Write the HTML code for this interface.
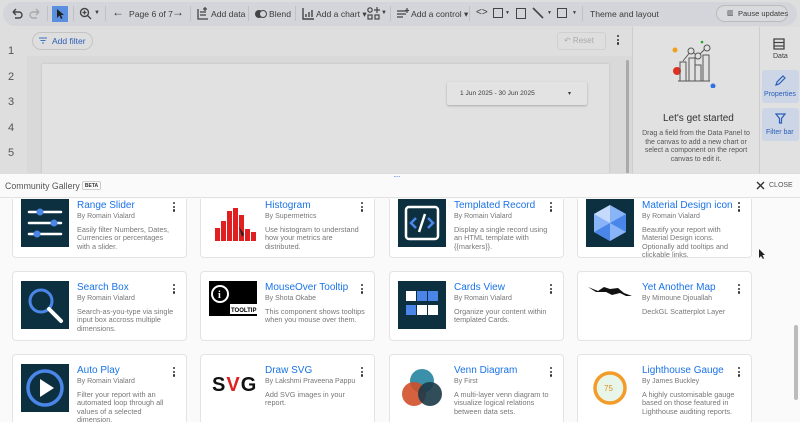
<!DOCTYPE html>
<html><head><meta charset="utf-8"><style>
*{box-sizing:border-box;margin:0;padding:0}
body{width:800px;height:422px;overflow:hidden;background:#dedede;font-family:"Liberation Sans",sans-serif;position:relative;color:#444}
.a{position:absolute}
.tb{left:3px;top:2px;width:794px;height:24px;background:#d3d5da;border-radius:12px}
.t{font-size:8.6px;color:#3c3c3c;position:absolute;top:9px;white-space:nowrap}
.sep{position:absolute;top:6px;width:1px;height:15px;background:#bfc1c5}
.card{position:absolute;width:175px;background:#fff;border:1px solid #e3e3e3;border-radius:4px}
.img{position:absolute;left:8px;width:48px;height:48px;background:#0d3040}
.ti{position:absolute;left:64px;font-size:10px;color:#1a73e8;white-space:nowrap}
.by{position:absolute;left:64px;font-size:7px;color:#777;white-space:nowrap}
.de{position:absolute;left:64px;font-size:7.3px;color:#777;line-height:8.3px;width:100px}
.dots{position:absolute;right:10px;width:3px;font-size:0}
.dots i{display:block;width:2.4px;height:2.4px;background:#333;border-radius:50%;margin-bottom:1.2px}
</style></head><body>
<div class="a tb"></div>
<svg class="a" style="left:10px;top:8px" width="14" height="12" viewBox="0 0 14 12"><path d="M3 4h6a3 3 0 010 6H5M3 4l3-3M3 4l3 3" stroke="#444" stroke-width="1.4" fill="none"/></svg>
<svg class="a" style="left:28px;top:8px" width="14" height="12" viewBox="0 0 14 12"><path d="M11 4H5a3 3 0 000 6h4M11 4L8 1M11 4L8 7" stroke="#aaa" stroke-width="1.4" fill="none"/></svg>
<div class="sep" style="left:47px"></div>
<div class="a" style="left:52px;top:6px;width:16px;height:16px;background:#5a8fe0"></div>
<svg class="a" style="left:56px;top:9px" width="8" height="10"><path d="M1 0v9l2.5-2.5L5 10l1.5-.7L5 6h3z" fill="#222"/></svg>
<div class="sep" style="left:73px"></div>
<svg class="a" style="left:79px;top:7px" width="13" height="13"><circle cx="5.5" cy="5.5" r="4" stroke="#444" stroke-width="1.4" fill="none"/><path d="M8.5 8.5l3.5 3.5M3.5 5.5h4M5.5 3.5v4" stroke="#444" stroke-width="1.3"/></svg>
<div class="t" style="left:94px;top:10px;font-size:6px">▼</div>
<div class="sep" style="left:105px"></div>
<div class="t" style="left:112px;top:5px;font-size:12px">←</div>
<div class="t" style="left:129px">Page 6 of 7</div>
<div class="t" style="left:172px;top:5px;font-size:12px">→</div>
<div class="sep" style="left:190px"></div>
<svg class="a" style="left:197px;top:7px" width="12" height="13"><path d="M1 2v10h10M3 5h6M3 8h6M8 0v4M6 2h4" stroke="#444" stroke-width="1.3" fill="none"/></svg>
<div class="t" style="left:211px">Add data</div>
<div class="sep" style="left:248px"></div>
<div class="a" style="left:255px;top:10px;width:8px;height:8px;border-radius:50%;background:#444"></div><div class="a" style="left:259px;top:10px;width:8px;height:8px;border-radius:50%;border:1.5px solid #444;background:#d3d5da"></div>
<div class="t" style="left:269px">Blend</div>
<div class="sep" style="left:295px"></div>
<svg class="a" style="left:302px;top:7px" width="13" height="13"><path d="M1 1v11h11M4 10V7M7 10V5M10 10V3" stroke="#444" stroke-width="1.4" fill="none"/></svg>
<div class="t" style="left:316px">Add a chart ▾</div>
<svg class="a" style="left:367px;top:7px" width="13" height="13"><circle cx="3" cy="3" r="2.2" stroke="#444" fill="none" stroke-width="1.2"/><rect x="1" y="8" width="4" height="4" stroke="#444" fill="none" stroke-width="1.2"/><rect x="8" y="8" width="4" height="4" stroke="#444" fill="none" stroke-width="1.2"/><path d="M10 0v6M7 3h6" stroke="#444" stroke-width="1.2"/></svg>
<div class="t" style="left:381px;top:10px;font-size:6px">▼</div>
<div class="sep" style="left:390px"></div>
<svg class="a" style="left:397px;top:8px" width="12" height="11"><path d="M0 3h9M0 6h9M0 9h6M10 0v5M8 2.5h4" stroke="#444" stroke-width="1.2"/></svg>
<div class="t" style="left:411px">Add a control ▾</div>
<div class="sep" style="left:469px"></div>
<div class="t" style="left:476px;top:7px;font-size:10px">&lt;&gt;</div>
<div class="a" style="left:493px;top:8px;width:10px;height:10px;border:1.4px solid #444"></div><div class="t" style="left:505px;top:10px;font-size:5px">▼</div>
<div class="a" style="left:516px;top:8px;width:10px;height:11px;border:1.4px solid #444"></div>
<svg class="a" style="left:532px;top:7px" width="12" height="12"><path d="M1 1l10 10" stroke="#444" stroke-width="1.6"/></svg><div class="t" style="left:547px;top:10px;font-size:5px">▼</div>
<div class="a" style="left:557px;top:8px;width:10px;height:10px;border:1.4px solid #444"></div><div class="t" style="left:572px;top:10px;font-size:5px">▼</div>
<div class="sep" style="left:582px"></div>
<div class="t" style="left:590px">Theme and layout</div>
<div class="a" style="left:716px;top:5px;width:72px;height:17px;border:1px solid #bbb;border-radius:9px;background:#d9dadd"></div>
<div class="t" style="left:727px;top:9px;font-size:7px">▥</div>
<div class="t" style="left:738px;top:9px;font-size:7.5px">Pause updates</div>
<!-- body -->
<div class="a" style="left:0;top:27px;width:27px;height:147px;background:#dedede"></div>
<div class="a" style="left:27px;top:27px;width:605px;height:147px;background:#d9d9d9"></div>
<div class="a" style="left:27px;top:27px;width:605px;height:29px;background:#dedede"></div>
<div class="a" style="left:32px;top:32px;width:61px;height:18px;border:1px solid #c4c4c4;border-radius:9px"></div>
<svg class="a" style="left:39px;top:37px" width="8" height="7"><path d="M0 1h8M1.5 3.5h5M3 6h2" stroke="#3c6fc6" stroke-width="1.1"/></svg>
<div class="t" style="left:52px;top:36px;color:#2b5fb8;font-size:8.5px">Add filter</div>
<div class="a" style="left:557px;top:32px;width:49px;height:18px;border:1px solid #d0d0d0;border-radius:3px"></div>
<div class="t" style="left:564px;top:36px;color:#aaa;font-size:8px">↶ Reset</div>
<div class="dots" style="left:617px;top:35px"><i></i><i></i><i></i></div>
<div class="a" style="left:42px;top:64px;width:567px;height:110px;background:#e1e1e1;box-shadow:0 0 2px #bbb"></div>
<div class="a" style="left:447px;top:82px;width:140px;height:23px;background:#e3e3e3;box-shadow:0 1px 2px #aaa;border-radius:2px"></div>
<div class="t" style="left:460px;top:90px;font-size:6.6px">1 Jun 2025 - 30 Jun 2025</div>
<div class="t" style="left:568px;top:90px;font-size:6px">▾</div>
<div class="a" style="left:626px;top:60px;width:3px;height:114px;background:#aaa;border-radius:2px"></div>
<div class="t" style="left:8px;top:45px;font-size:11px;color:#555">1</div>
<div class="t" style="left:8px;top:71px;font-size:11px;color:#555">2</div>
<div class="t" style="left:8px;top:96px;font-size:11px;color:#555">3</div>
<div class="t" style="left:8px;top:122px;font-size:11px;color:#555">4</div>
<div class="t" style="left:8px;top:147px;font-size:11px;color:#555">5</div>
<div class="a" style="left:632px;top:27px;width:128px;height:147px;background:#e1e1e1;border-left:1px solid #ccc;border-right:1px solid #ccc"></div>
<svg class="a" style="left:665px;top:38px" width="70" height="50"><circle cx="10" cy="12" r="2.5" fill="#f0a020"/><circle cx="37" cy="4" r="1.3" fill="#2a2"/><circle cx="12" cy="33" r="4" fill="#e03020"/><circle cx="48" cy="48" r="2.5" fill="#3070e0"/><path d="M15 43V24h6v19M24 43V20h6v23M30 43V27h6v16M38 43V17h6v26M13 43h32M18 23l8-10 7 5 8-8" stroke="#555" stroke-width="1" fill="none"/><circle cx="26" cy="13" r="3" fill="#e1e1e1" stroke="#555"/><circle cx="33" cy="18" r="3" fill="#e1e1e1" stroke="#555"/><circle cx="42" cy="10" r="3" fill="#e1e1e1" stroke="#555"/></svg>
<div class="t" style="left:663px;top:113px;font-size:10px;color:#333">Let's get started</div>
<div class="a" style="left:638px;top:130px;width:116px;text-align:center;font-size:7px;line-height:8.7px;color:#555">Drag a field from the Data Panel to the canvas to add a new chart or select a component on the report canvas to edit it.</div>
<div class="a" style="left:760px;top:27px;width:40px;height:147px;background:#e1e1e1"></div>
<svg class="a" style="left:773px;top:38px" width="12" height="12"><path d="M1 1h10v10H1zM1 4.5h10M1 8h10" stroke="#444" stroke-width="1.3" fill="none"/></svg>
<div class="t" style="left:773px;top:53px;font-size:7px">Data</div>
<div class="a" style="left:762px;top:70px;width:37px;height:33px;background:#ccd6e6;border-radius:3px"></div>
<svg class="a" style="left:775px;top:75px" width="11" height="11"><path d="M1 10l1-3 6-6 2 2-6 6z" stroke="#2b5fb8" stroke-width="1.2" fill="none"/></svg>
<div class="t" style="left:764px;top:91px;font-size:7px;color:#2b5fb8">Properties</div>
<div class="a" style="left:762px;top:108px;width:37px;height:33px;background:#ccd6e6;border-radius:3px"></div>
<svg class="a" style="left:775px;top:113px" width="11" height="11"><path d="M1 1h9L6.5 5.5V10h-2V5.5z" stroke="#2b5fb8" stroke-width="1.2" fill="none"/></svg>
<div class="t" style="left:766px;top:129px;font-size:7px;color:#2b5fb8">Filter bar</div>
<!-- gallery -->
<div class="a" style="left:0;top:173px;width:800px;height:249px;background:#fafafa;border-top:1px solid #ddd"></div>
<div class="t" style="left:393px;top:172px;font-size:8px;color:#4a7fd8;letter-spacing:-1px">····</div>
<div class="a" style="left:0;top:173px;width:800px;height:25px;border-bottom:1px solid #e2e2e2"></div>
<div class="t" style="left:5px;top:181px;font-size:8.8px;color:#555">Community Gallery</div>
<div class="a" style="left:82px;top:181px;width:19px;height:9px;border:1px solid #ccc;border-radius:2px;font-size:5px;font-weight:bold;text-align:center;line-height:8px;color:#333">BETA</div>
<svg class="a" style="left:756px;top:181px" width="9" height="9"><path d="M1 1l7 7M8 1L1 8" stroke="#333" stroke-width="1.4"/></svg>
<div class="t" style="left:769px;top:182px;font-size:7px;color:#555">CLOSE</div>
<div class="a" style="left:794px;top:325px;width:4px;height:75px;background:#bbb;border-radius:2px"></div>
<div class="a" style="left:0;top:199px;width:790px;height:223px;overflow:hidden">
<div class="card" style="left:12px;top:-20px;height:79px"><div class="img" style="top:19px"><svg width="48" height="48"><g stroke="#fff" stroke-width="2.5" stroke-linecap="round"><path d="M8 13h32M8 24h32M8 35h32"/></g><circle cx="19" cy="13" r="3.5" fill="#4a86e8"/><circle cx="33" cy="24" r="3.5" fill="#4a86e8"/><circle cx="16" cy="35" r="3.5" fill="#4a86e8"/></svg></div><div class="ti" style="top:20px">Range Slider</div><div class="by" style="top:33px">By Romain Vialard</div><div class="de" style="top:46px">Easily filter Numbers, Dates, Currencies or percentages with a slider.</div><div class="dots" style="top:22px"><i></i><i></i><i></i></div></div>
<div class="card" style="left:200px;top:-20px;height:79px"><div class="img" style="top:19px;background:#fff"><svg width="48" height="48"><g fill="#e02020"><rect x="6" y="29" width="5" height="13"/><rect x="12" y="22" width="5" height="20"/><rect x="18" y="12" width="5" height="30"/><rect x="24" y="9" width="5" height="33"/><rect x="30" y="16" width="5" height="26"/><rect x="36" y="30" width="5" height="12"/><rect x="42" y="33" width="5" height="9"/></g><path d="M30 28l3 10 2-3 3 4z" fill="#222"/></svg></div><div class="ti" style="top:20px">Histogram</div><div class="by" style="top:33px">By Supermetrics</div><div class="de" style="top:46px">Use histogram to understand how your metrics are distributed.</div><div class="dots" style="top:22px"><i></i><i></i><i></i></div></div>
<div class="card" style="left:389px;top:-20px;height:79px"><div class="img" style="top:19px"><svg width="48" height="48"><rect x="8" y="8" width="32" height="32" rx="3" fill="none" stroke="#fff" stroke-width="2.5"/><path d="M18 19l-5 5 5 5M30 19l5 5-5 5" stroke="#4a86e8" stroke-width="2.5" fill="none"/><path d="M27 15l-6 18" stroke="#fff" stroke-width="2.5"/></svg></div><div class="ti" style="top:20px">Templated Record</div><div class="by" style="top:33px">By Romain Vialard</div><div class="de" style="top:46px">Display a single record using an HTML template with {{markers}}.</div><div class="dots" style="top:22px"><i></i><i></i><i></i></div></div>
<div class="card" style="left:577px;top:-20px;height:79px"><div class="img" style="top:19px"><svg width="48" height="48"><path d="M24 6l16 9v18l-16 9-16-9V15z" fill="#8ab4f8"/><path d="M24 24l16-9v18zM24 24L8 33l16 9z" fill="#4a86e8"/><path d="M24 24V6L8 15z" fill="#c6dafc"/></svg></div><div class="ti" style="top:20px">Material Design icon</div><div class="by" style="top:33px">By Romain Vialard</div><div class="de" style="top:46px">Beautify your report with Material Design icons. Optionally add tooltips and clickable links.</div><div class="dots" style="top:22px"><i></i><i></i><i></i></div></div>
<div class="card" style="left:12px;top:72px;height:70px"><div class="img" style="top:9px"><svg width="48" height="48"><circle cx="20" cy="20" r="11" fill="none" stroke="#4a86e8" stroke-width="3"/><path d="M28 28l12 12" stroke="#fff" stroke-width="4" stroke-linecap="round"/></svg></div><div class="ti" style="top:10px">Search Box</div><div class="by" style="top:23px">By Romain Vialard</div><div class="de" style="top:36px">Search-as-you-type via single input box accross multiple dimensions.</div><div class="dots" style="top:12px"><i></i><i></i><i></i></div></div>
<div class="card" style="left:200px;top:72px;height:70px"><div class="img" style="top:9px;background:#000;height:35px;width:48px"><svg width="48" height="35"><circle cx="11" cy="13" r="8" fill="none" stroke="#fff" stroke-width="2"/><text x="9" y="17" font-size="10" font-weight="bold" fill="#fff" font-family="Liberation Serif">i</text><rect x="21" y="23" width="27" height="10" fill="#fff"/><text x="22" y="31" font-size="6" font-weight="bold" fill="#000" font-family="Liberation Sans">TOOLTIP</text></svg></div><div class="ti" style="top:10px">MouseOver Tooltip</div><div class="by" style="top:23px">By Shota Okabe</div><div class="de" style="top:36px">This component shows tooltips when you mouse over them.</div><div class="dots" style="top:12px"><i></i><i></i><i></i></div></div>
<div class="card" style="left:389px;top:72px;height:70px"><div class="img" style="top:9px"><svg width="48" height="48"><g fill="#fff"><rect x="8" y="10" width="10" height="10"/><rect x="8" y="24" width="10" height="10" fill="#4a86e8"/><rect x="19" y="10" width="10" height="10" fill="#4a86e8"/><rect x="19" y="24" width="10" height="10"/><rect x="30" y="10" width="10" height="10" fill="#4a86e8"/><rect x="30" y="24" width="10" height="10"/></g></svg></div><div class="ti" style="top:10px">Cards View</div><div class="by" style="top:23px">By Romain Vialard</div><div class="de" style="top:36px">Organize your content within templated Cards.</div><div class="dots" style="top:12px"><i></i><i></i><i></i></div></div>
<div class="card" style="left:577px;top:72px;height:70px"><div class="img" style="top:9px;background:#fff"><svg width="48" height="20"><path d="M2 6l10 4 6-4 6 2 8-1 6 5 8 3-6 0-6-3-8 2-6-3-10 0z" fill="#111"/></svg></div><div class="ti" style="top:10px">Yet Another Map</div><div class="by" style="top:23px">By Mimoune Djouallah</div><div class="de" style="top:36px">DeckGL Scatterplot Layer</div><div class="dots" style="top:12px"><i></i><i></i><i></i></div></div>
<div class="card" style="left:12px;top:155px;height:80px"><div class="img" style="top:9px"><svg width="48" height="48"><circle cx="24" cy="24" r="17" fill="none" stroke="#4a86e8" stroke-width="3.5"/><path d="M19 15v18l14-9z" fill="#fff"/></svg></div><div class="ti" style="top:10px">Auto Play</div><div class="by" style="top:23px">By Romain Vialard</div><div class="de" style="top:36px">Filter your report with an automated loop through all values of a selected dimension.</div><div class="dots" style="top:12px"><i></i><i></i><i></i></div></div>
<div class="card" style="left:200px;top:155px;height:80px"><div class="a" style="left:11px;top:19px;font-size:20px;font-weight:bold;letter-spacing:1px;color:#111">S<span style="color:#d22">V</span>G</div><div class="ti" style="top:10px">Draw SVG</div><div class="by" style="top:23px">By Lakshmi Praveena Pappu</div><div class="de" style="top:36px">Add SVG images in your report.</div><div class="dots" style="top:12px"><i></i><i></i><i></i></div></div>
<div class="card" style="left:389px;top:155px;height:80px"><div class="img" style="top:9px;background:none"><svg width="48" height="48"><circle cx="24" cy="17" r="12" fill="#3a90a8"/><circle cx="16" cy="30" r="12" fill="#d0502a" fill-opacity=".9"/><circle cx="32" cy="30" r="12" fill="#1c3a48" fill-opacity=".9"/></svg></div><div class="ti" style="top:10px">Venn Diagram</div><div class="by" style="top:23px">By First</div><div class="de" style="top:36px">A multi-layer venn diagram to visualize logical relations between data sets.</div><div class="dots" style="top:12px"><i></i><i></i><i></i></div></div>
<div class="card" style="left:577px;top:155px;height:80px"><div class="img" style="top:9px;background:none"><svg width="48" height="48"><circle cx="24" cy="24" r="15" fill="#e8f6ea"/><circle cx="24" cy="24" r="15" fill="none" stroke="#f39c2a" stroke-width="3.5"/><text x="18" y="27" font-size="8" fill="#e09020" font-family="Liberation Sans">75</text></svg></div><div class="ti" style="top:10px">Lighthouse Gauge</div><div class="by" style="top:23px">By James Buckley</div><div class="de" style="top:36px">A highly customisable gauge based on those featured in Lighthouse auditing reports.</div><div class="dots" style="top:12px"><i></i><i></i><i></i></div></div>
</div>
<svg class="a" style="left:758px;top:249px" width="8" height="11"><path d="M1 0v9l2-2 2 3 1-.6L4.5 6H7z" fill="#222"/></svg>
</body></html>
